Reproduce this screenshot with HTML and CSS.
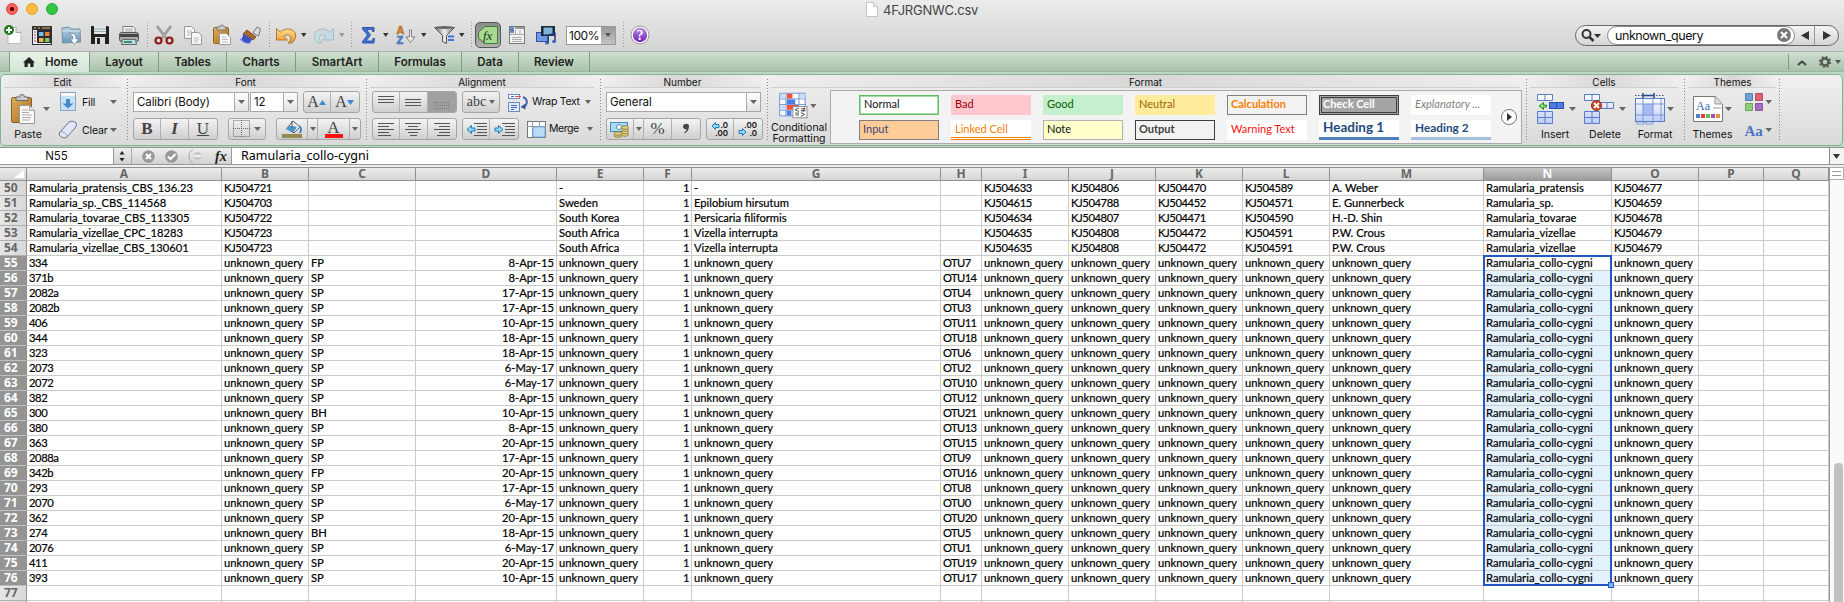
FILE: index.html
```html
<!DOCTYPE html>
<html lang="en">
<head>
<meta charset="utf-8">
<title>4FJRGNWC.csv</title>
<link rel="stylesheet" href="styles.css">
</head>
<body>
<svg width="0" height="0" class="defs">
  <defs>
    <linearGradient id="gBlue" x1="0" y1="0" x2="0" y2="1"><stop offset="0" stop-color="#b9d3e4"/><stop offset="1" stop-color="#6d97b5"/></linearGradient>
    <linearGradient id="gGold" x1="0" y1="0" x2="1" y2="1"><stop offset="0" stop-color="#ddb163"/><stop offset="1" stop-color="#a9690f"/></linearGradient>
    <linearGradient id="gOrange" x1="0" y1="0" x2="0" y2="1"><stop offset="0" stop-color="#ffe0a0"/><stop offset="1" stop-color="#ee9320"/></linearGradient>
    <linearGradient id="gPurple" x1="0" y1="0" x2="0" y2="1"><stop offset="0" stop-color="#b98ae0"/><stop offset="1" stop-color="#6a22b8"/></linearGradient>
    <linearGradient id="gCell" x1="0" y1="0" x2="0" y2="1"><stop offset="0" stop-color="#fff"/><stop offset="1" stop-color="#bccbf5"/></linearGradient>
    <linearGradient id="gMetal" x1="0" y1="0" x2="1" y2="0"><stop offset="0" stop-color="#666"/><stop offset=".5" stop-color="#eee"/><stop offset="1" stop-color="#777"/></linearGradient>
  </defs>
</svg>
<div class="window">
  <header class="chrome">
    <div class="titlebar">
      <div class="lights"><i class="red"></i><i class="yellow"></i><i class="green"></i></div>
      <div class="doc-title"><svg width="14" height="17" viewBox="0 0 14 17"><path d="M1.500 1.500h7l4 4v10h-11z" fill="#fff" stroke="#c4c4c4"/><path d="M8.500 1.500v4h4" fill="#eee" stroke="#c4c4c4"/></svg><span>4FJRGNWC.csv</span></div>
    </div>
    <div class="toolbar">
      <svg width="147" height="30" viewBox="0 20 147 30">
        <path d="M8 27.500h8l5 5v11H8z" fill="#fdfdfd" stroke="#bbb"/><path d="M16 27.500v5h5" fill="#ddd" stroke="#aaa"/>
        <circle cx="9" cy="30" r="5" fill="#1d7a23"/><path d="M9 27v6M6 30h6" stroke="#fff" stroke-width="2"/>
        <rect x="32.500" y="26.500" width="19" height="18" fill="#e8eef5" stroke="#333"/><rect x="32" y="26" width="20" height="4" fill="#333"/><path d="M34 28h2M38 28h2M42 28h8" stroke="#e8b060"/><rect x="37" y="30" width="14" height="13" fill="#272b38"/><rect x="39" y="32" width="4.500" height="4" fill="#6fc1f0"/><rect x="45" y="32" width="4.500" height="4" fill="#f08030"/><rect x="39" y="38" width="4.500" height="4" fill="#f4b63c"/><rect x="45" y="38" width="4.500" height="4" fill="#7cc85a"/><path d="M34 32h2M34 35h2M34 38h2M34 41h2" stroke="#d33"/>
        <path d="M62 28l7-1 2 2h9l.5 13-18 1z" fill="url(#gBlue)" stroke="#6f8ea6"/><path d="M62 31h18" stroke="#d5e5ef"/><path d="M69 33c7 0 7 3 7 6h3l-4.500 5.500-4.500-5.500h3c0-3-1-4-4-6z" fill="#fff" stroke="#6686a0" stroke-width=".8"/>
        <path d="M91 26h17l1 1v17H91z" fill="#222"/><rect x="94" y="26" width="12" height="8" fill="#dfe7ee"/><path d="M94 29h12M94 31.500h12" stroke="#9aa"/><rect x="95" y="37" width="10" height="7" fill="#ddd"/><rect x="97" y="38" width="3" height="6" fill="#222"/>
        <path d="M123 33v-6.500h10l2 2V33" fill="#fff" stroke="#777"/><path d="M125 29h8M125 31h8" stroke="#999"/><rect x="119.500" y="32.500" width="19" height="9" rx="2" fill="#a9a9a9" stroke="#555"/><rect x="120" y="34" width="18" height="3" fill="#444"/><path d="M122.500 39.500h13l1 5h-15z" fill="#b9dcf3" stroke="#666"/><path d="M124 42h8" stroke="#3f8f5a" stroke-width="2"/>
      </svg>
      <i class="dots"></i>
      <svg width="121" height="30" viewBox="148 20 121 30">
        <path d="M157 26l9 12M171 26l-9 12" stroke="#777" stroke-width="2.200"/><path d="M157 26l9 12M171 26l-9 12" stroke="#ddd" stroke-width=".8"/><circle cx="158.500" cy="40.500" r="3" fill="none" stroke="#8e1f16" stroke-width="2.200"/><circle cx="169.500" cy="40.500" r="3" fill="none" stroke="#8e1f16" stroke-width="2.200"/>
        <g fill="#f7f7f7" stroke="#999"><path d="M184.500 26.500h7l3 3v9h-10z"/><path d="M191.500 32.500h7l3 3v9h-10z"/></g><path d="M187 31h5M187 33h5M187 35h3M194 38h5M194 40h5M194 42h4" stroke="#aaa" stroke-width=".8"/>
        <rect x="213.500" y="27.500" width="15" height="16" rx="1" fill="url(#gGold)" stroke="#8d6220"/><path d="M217 30v-3h3a2 2 0 0 1 4 0h2v3z" fill="#ccc" stroke="#666" stroke-width=".8"/><path d="M219.500 33.500h7l4 4v7h-11z" fill="#f9f9f9" stroke="#999"/><path d="M222 37h4M222 39.500h6M222 42h6" stroke="#aaa" stroke-width=".8"/>
        <path d="M253 33l4-6 3.500 2-2 7z" fill="#ddd" stroke="#777"/><path d="M247 30l9 7-3 3-10-6z" fill="#a96a2c" stroke="#6b3c12" stroke-width=".8"/><path d="M243 34l9 5-2 4c-4 1-7 0-10-4 2 0 3-2 3-5z" fill="#3e50c8"/><path d="M241 39c3 4 6 5 9 4" fill="none" stroke="#8ea2f4"/>
      </svg>
      <i class="dots"></i>
      <svg width="81" height="30" viewBox="270 20 81 30">
        <path d="M276.500 28.500v11.500h11l-3.800-3.600c3-2.700 7-2 7 2 0 2-1.200 3.400-2.700 4.600h4c6.500-6 4-13.500-3.500-14-3.500-.2-6.300 1.200-8.300 3.200z" fill="url(#gOrange)" stroke="#b5792a"/>
        <path d="M301 33h5.500l-2.750 4z" fill="#333"/>
        <path d="M333.500 28.500v11.500h-11l3.800-3.600c-3-2.700-7-2-7 2 0 2 1.200 3.400 2.700 4.600h-4c-6.500-6-4-13.500 3.500-14 3.500-.2 6.300 1.200 8.300 3.200z" fill="#c8dae4" stroke="#a5bccb"/>
        <path d="M339 33h5.500l-2.750 4z" fill="#999"/>
      </svg>
      <i class="dots"></i>
      <svg width="119" height="30" viewBox="352 20 119 30">
        <path d="M362.500 27.500H374v4h-1.500c0-2-1-2-2-2h-4l4 5.500-4.500 6h4.500c1.500 0 2-.5 2.500-2.500h1.500l-.5 4.500h-11.500v-1.500l5-6.500-5-6z" fill="#3f72da" stroke="#1c3f9c" stroke-width=".8"/>
        <path d="M383 33h5.500l-2.750 4z" fill="#333"/>
        <text x="396.500" y="34" class="az-a">A</text><text x="396.500" y="44" class="az-z">Z</text>
        <path d="M409.500 30h2v7h3.500l-4.500 5.500-4.500-5.500h3.500z" fill="#eee" stroke="#777" stroke-width=".9"/>
        <path d="M421 33h5.500l-2.750 4z" fill="#333"/>
        <path d="M434.500 27.500h20l-8 8v8l-4-2v-6z" fill="url(#gMetal)" stroke="#555"/><ellipse cx="444.500" cy="27.500" rx="10" ry="1.500" fill="#666"/><path d="M448 36.500h6M448 40h6" stroke="#3c76d6" stroke-width="2"/>
        <path d="M459 33h5.500l-2.750 4z" fill="#333"/>
      </svg>
      <i class="dots"></i>
      <div class="fx-toggle"><svg width="20" height="19" viewBox="0 0 20 19"><path d="M7 .5h12.500v17H7L.5 12V6z" fill="#a9d794" stroke="#3f7d39"/><text x="5" y="13.500" class="fx">fx</text></svg></div>
      <svg width="64" height="30" viewBox="502 20 64 30">
        <rect x="509.500" y="26.500" width="15" height="17" fill="#f4f4f4" stroke="#777"/><rect x="510" y="27" width="4" height="6" fill="#4d9be6"/><rect x="511" y="29" width="2" height="2" fill="#e33"/><path d="M515 28h9" stroke="#999" stroke-width="2"/><path d="M510 34.500h14M515.500 30v5M520 30v5M512 37.500h10M512 39.500h10M512 41.500h10" stroke="#aaa"/>
        <rect x="536.500" y="32.500" width="12" height="9" fill="#6f9ae8" stroke="#2f4f9f"/><rect x="541" y="26" width="14" height="10" fill="#1c2a35"/><rect x="543.500" y="27.500" width="9" height="7" fill="#7fb5d8"/><path d="M548 43v-8l7-1.500v8" fill="none" stroke="#223f85" stroke-width="1.500"/><ellipse cx="547" cy="43" rx="2" ry="1.500" fill="#3c63bb"/><ellipse cx="554" cy="41.500" rx="2" ry="1.500" fill="#3c63bb"/>
      </svg>
      <div class="zoom-box"><span>100%</span><b><svg width="8" height="6"><path d="M1 1h6L4 5z" fill="#555"/></svg></b></div>
      <span class="gap7"></span>
      <i class="dots"></i>
      <svg width="34" height="30" viewBox="624 20 34 30"><circle cx="640" cy="35" r="9" fill="#fff" stroke="#999"/><circle cx="640" cy="35" r="7.200" fill="url(#gPurple)"/><text x="640" y="40" class="help">?</text></svg>
      <div class="search">
        <svg width="31" height="19" viewBox="0 0 31 19"><circle cx="10.500" cy="8" r="4" fill="none" stroke="#333" stroke-width="2"/><path d="M13.500 11l4 4" stroke="#333" stroke-width="2.500"/><path d="M18 8h7l-3.500 4z" fill="#333"/></svg>
        <div class="search-field"><span>unknown_query</span><svg width="16" height="16"><circle cx="8" cy="8" r="7" fill="#777"/><path d="M5 5l6 6M11 5l-6 6" stroke="#fff" stroke-width="2"/></svg></div>
        <div class="nav"><svg width="8" height="9"><path d="M8 0v9L0 4.500z" fill="#333"/></svg></div>
        <div class="nav next"><svg width="8" height="9"><path d="M0 0v9l8-4.500z" fill="#333"/></svg></div>
      </div>
    </div>
  </header>

  <nav class="tabs">
    <div class="tab lead"></div>
    <div class="tab home"><svg width="12" height="10" viewBox="0 0 12 10"><path d="M6 0l6 5.500h-1.500V10H7.300V6.500H4.700V10H1.500V5.500H0z" fill="#222"/></svg><span>Home</span></div>
    <div class="tab w69">Layout</div><div class="tab w68">Tables</div><div class="tab w69">Charts</div><div class="tab w83">SmartArt</div><div class="tab w83">Formulas</div><div class="tab w57">Data</div><div class="tab w71">Review</div>
    <div class="tab-tools"><svg width="54" height="20" viewBox="1789 52 54 20"><path d="M1798 65l4-3.500 4 3.500" fill="none" stroke="#444" stroke-width="2"/><circle cx="1825" cy="62" r="3.500" fill="none" stroke="#555" stroke-width="2.400"/><circle cx="1825" cy="62" r="5.200" fill="none" stroke="#555" stroke-width="1.800" stroke-dasharray="2 2.080"/><path d="M1835 60h6l-3 4z" fill="#555"/></svg></div>
  </nav>

  <section class="ribbon"><div class="panel">
    <div class="group g-edit"><h6>Edit</h6><div class="body">
      <div class="paste"><svg width="52" height="38" viewBox="2 90 52 38">
        <rect x="10.500" y="97.500" width="20" height="25" rx="1.500" fill="url(#gGold)" stroke="#87601f"/><path d="M15 100.500V97h3.500a2.500 2.500 0 0 1 5 0H27v3.500z" fill="#ccc" stroke="#666"/><path d="M18.500 105.500h10l5 5v13h-15z" fill="#fafafa" stroke="#999"/><path d="M28.500 105.500v5h5" fill="#ddd" stroke="#aaa"/><path d="M21 110h6M21 112.500h7M21 115h10M21 117.500h9M21 120h8" stroke="#aaa"/><path d="M42 107h7l-3.500 4z" fill="#666"/></svg><span>Paste</span></div>
      <div class="stack">
        <div class="cmd"><svg width="27" height="24" viewBox="55 90 27 24"><rect x="60.500" y="92.500" width="15" height="18" fill="#c8e1f5" stroke="#8aa5bf"/><rect x="61" y="93" width="14" height="3" fill="#f8f8f8"/><path d="M66 99h4v4.500h3.500l-5.500 5-5.500-5H66z" fill="#4488d0"/></svg><span class="w28">Fill</span><svg class="dn"><path d="M0 0h7l-3.500 4z"/></svg></div>
        <div class="cmd"><svg width="27" height="24" viewBox="55 118 27 24"><path d="M60 132l9-10c1-1 6-1 7 1 1 1 0 4-1 5l-8 9c-2 2-6 0-7-1-1-1-1-3 0-4z" fill="#e1e6f6" stroke="#667291"/><path d="M60 132c1-1 6 0 7 4" fill="none" stroke="#8893b5"/></svg><span class="w28">Clear</span><svg class="dn"><path d="M0 0h7l-3.500 4z"/></svg></div>
      </div>
    </div></div>
    <div class="group g-font"><h6>Font</h6><div class="rows">
      <div class="row"><div class="combo w116"><span>Calibri (Body)</span><b><svg class="dn"><path d="M0 0h7l-3.500 4z"/></svg></b></div><div class="combo w48"><span>12</span><b><svg class="dn"><path d="M0 0h7l-3.500 4z"/></svg></b></div>
        <div class="btns ml5"><div class="w27 serif s14">A<svg width="8" height="5"><path d="M0 5h7L3.500 0z" fill="#3f87d6"/></svg></div><div class="w28 serif s14">A<svg width="8" height="5"><path d="M0 0h7L3.500 5z" fill="#3f87d6"/></svg></div></div></div>
      <div class="row"><div class="btns"><div class="w27 serif bold">B</div><div class="w28 serif ital">I</div><div class="w28 serif und">U</div></div>
        <div class="btns ml10"><div class="w38"><svg width="18" height="18"><path d="M.5.5h16v16H.5zM8.500 0v17M0 8.500h17" fill="none" stroke="#666" stroke-dasharray="1 1"/></svg><svg class="dn ml3"><path d="M0 0h7l-3.500 4z"/></svg></div></div>
        <div class="btns ml10"><div class="w31"><svg width="24" height="20" viewBox="278 119 24 20"><path d="M286 127l5-6 7 6-6 6z" fill="#f4f4f4" stroke="#555"/><path d="M284 129c2-4 5-3 11-2l-4 6z" fill="#4692c9"/><path d="M297 126c3 2 2 4 1 7" fill="none" stroke="#3987c4" stroke-width="2"/><path d="M290 121v6" stroke="#555"/><rect x="280" y="134" width="20" height="4" fill="#948a54"/></svg></div><div class="w10"><svg class="dn sm"><path d="M0 0h6l-3 4z"/></svg></div><div class="w32 fontcolor serif"><span>A</span><i></i></div><div class="w10"><svg class="dn sm"><path d="M0 0h6l-3 4z"/></svg></div></div></div>
    </div></div>
    <div class="group g-align"><h6>Alignment</h6><div class="rows">
      <div class="row"><div class="btns"><div class="w27"><svg width="17" height="16" class="lines"><path d="M0 2.500h16M0 5.500h16M0 8.500h16"/></svg></div><div class="w28"><svg width="17" height="16" class="lines"><path d="M0 5.500h16M0 8.500h16M0 11.500h16"/></svg></div><div class="w28 on"><svg width="17" height="16" class="lines faint"><path d="M0 8.500h16M0 11.500h16M0 14.500h16"/></svg></div></div>
        <div class="btns ml5"><div class="w37 serif s13">abc<svg class="dn ml3 sm"><path d="M0 0h6l-3 4z"/></svg></div></div>
        <svg class="ml7" width="24" height="22" viewBox="505 90 24 22"><rect x="506.500" y="93.500" width="11" height="4" fill="#fff" stroke="#6b8ac4"/><path d="M509 95.500h3" stroke="#456fc0"/><path d="M513 95.500h6" stroke="#e05050"/><rect x="506.500" y="101.500" width="11" height="9" fill="#dfe9fa" stroke="#6b8ac4"/><path d="M509 104.500h6M509 106.500h6M509 108.500h3" stroke="#456fc0"/><path d="M521 96c5 2 5 7 1 10" fill="none" stroke="#4a68b3" stroke-width="2"/><path d="M518.500 106l5-3.500v6z" fill="#34529f"/></svg><span class="lbl wrap">Wrap Text</span><svg class="dn sm"><path d="M0 0h6l-3 4z"/></svg></div>
      <div class="row"><div class="btns"><div class="w27"><svg width="17" height="16" class="lines"><path d="M0 2.500h16M0 5.500h11M0 8.500h16M0 11.500h11M0 14.500h13"/></svg></div><div class="w28"><svg width="17" height="16" class="lines"><path d="M0 2.500h16M3 5.500h10M0 8.500h16M3 11.500h10M5 14.500h7"/></svg></div><div class="w28"><svg width="17" height="16" class="lines"><path d="M0 2.500h16M5 5.500h11M0 8.500h16M5 11.500h11M3 14.500h13"/></svg></div></div>
        <div class="btns ml5"><div class="w27"><svg width="21" height="16" class="lines"><path d="M8 2.500h13M11 5.500h10M11 8.500h10M11 11.500h10M8 14.500h13"/><path d="M1 8.500l4.500-4v2.500H9v3H5.500v2.500z" class="cyan"/></svg></div><div class="w28"><svg width="21" height="16" class="lines"><path d="M8 2.500h13M11 5.500h10M11 8.500h10M11 11.500h10M8 14.500h13"/><path d="M9 8.500l-4.500-4v2.500H1v3h3.500v2.500z" class="cyan"/></svg></div></div>
        <svg class="ml7" width="22" height="20" viewBox="523 119 22 20"><rect x="524.500" y="121.500" width="18" height="16" fill="#fff" stroke="#777"/><path d="M524 126.500h19M529.500 121v16M536.500 121v5" stroke="#99a"/><rect x="530" y="127" width="12" height="10" fill="#b9dbf7" stroke="#6aa2dc" stroke-width=".8"/></svg><span class="lbl merge">Merge</span><svg class="dn"><path d="M0 0h6l-3 4z"/></svg></div>
    </div></div>
    <div class="group g-number"><h6>Number</h6><div class="rows">
      <div class="row"><div class="combo w155"><span>General</span><b><svg class="dn"><path d="M0 0h7l-3.500 4z"/></svg></b></div></div>
      <div class="row"><div class="btns"><div class="w27"><svg width="20" height="17"><rect x=".5" y="1.500" width="17" height="9" fill="#a9dcf3" stroke="#4a8fb5"/><circle cx="9" cy="6" r="2.500" fill="#fff" stroke="#4a8fb5"/><g fill="#e0cf86" stroke="#857233" stroke-width=".8"><ellipse cx="8" cy="14.500" rx="4" ry="1.800"/><ellipse cx="8" cy="12.500" rx="4" ry="1.800"/><ellipse cx="15" cy="13.500" rx="3.500" ry="1.800"/><ellipse cx="15" cy="11" rx="3.500" ry="1.800"/><ellipse cx="15" cy="8.500" rx="3.500" ry="1.800"/><ellipse cx="15" cy="6.500" rx="3.500" ry="1.800"/></g></svg></div><div class="w10"><svg class="dn sm"><path d="M0 0h6l-3 4z"/></svg></div><div class="w28 serif pct">%</div><div class="w28"><svg width="8" height="12" viewBox="0 0 8 12"><path d="M3.500 1a2.500 2.500 0 0 1 3.500 2.500c0 3.500-2 5.500-4.500 7l-.5-.8c1.500-1 2.500-2.200 2.600-3.500C2 6.500 1 5 1 3.600A2.500 2.500 0 0 1 3.500 1z" fill="#444"/></svg></div></div>
        <div class="btns ml5"><div class="w27 dec"><span>.0</span><span>.00</span><svg width="9" height="8"><path d="M1 4l3.500-3.500v2H8v3H4.500v2z" class="cyan"/></svg></div><div class="w28 dec d2"><span>.00</span><span>.0</span><svg width="9" height="8"><path d="M8 4L4.500.5v2H1v3h3.500v2z" class="cyan"/></svg></div></div></div>
    </div></div>
    <div class="group g-format"><h6>Format</h6><div class="body">
      <div class="cond"><svg width="50" height="34" viewBox="775 90 50 34"><rect x="779.500" y="93.500" width="27" height="24" fill="#fff" stroke="#6b90d8"/><path d="M779 99.500h28M779 105.500h28M779 111.500h28M786 93v25M800 93v25" stroke="#6b90d8"/><path d="M780 94h6v5h-6zM780 106h6v5h-6zM801 94h5v5h-5z" fill="#cbdcf8"/><path d="M787 94h6v5h-6zM787 106h12v5h-12z" fill="#f0513a"/><path d="M787 100h9v5h-9zM787 112h5v5h-5z" fill="#4d7de0"/><rect x="793.500" y="107.500" width="15" height="12" fill="#fff" stroke="#888"/><path d="M800 109l-4 2 4 2M796 114.500h4M802 110h5M802 112h5M806 108.500l-2 5M802 114l4 2-4 2M796 116.500h4" fill="none" stroke="#333" stroke-width=".9"/><path d="M812 105h6.500l-3.250 4z" fill="#666"/></svg><span>Conditional</span><span>Formatting</span></div>
      <div class="gallery"><div class="styles">
        <div class="st normal">Normal</div><div class="st bad">Bad</div><div class="st good">Good</div><div class="st neutral">Neutral</div><div class="st calc">Calculation</div><div class="st check">Check Cell</div><div class="st expl">Explanatory ...</div>
        <div class="st input">Input</div><div class="st linked">Linked Cell</div><div class="st note">Note</div><div class="st output">Output</div><div class="st warn">Warning Text</div><div class="st head1">Heading 1</div><div class="st head2">Heading 2</div>
      </div><svg width="18" height="18"><circle cx="9" cy="9" r="7.500" fill="#fff" stroke="#777"/><path d="M7 5v8l5-4z" fill="#333"/></svg></div>
    </div></div>
    <div class="group g-cells"><h6>Cells</h6><div class="body">
      <div class="big w50"><svg width="50" height="38" viewBox="1530 90 50 38"><g fill="url(#gCell)" stroke="#5b7cc8"><path d="M1537.500 94.500h15v6h-15zM1545 94v7M1537.500 111.500h15v12h-15zM1545 111v13M1537 117.500h16"/></g><rect x="1549.500" y="102.500" width="14" height="6" fill="#4f7ce0" stroke="#2a4fae"/><path d="M1556.500 103v6" stroke="#2a4fae"/><path d="M1539 106l4.500-3.500v2.500h3v2h-3v2.500z" fill="#8be07a" stroke="#2f8f2f"/><path d="M1569 107h7l-3.500 4z" fill="#666"/></svg><span>Insert</span></div>
      <div class="big w50"><svg width="50" height="38" viewBox="1580 90 50 38"><g fill="url(#gCell)" stroke="#5b7cc8"><path d="M1584.500 94.500h15v6h-15zM1592 94v7M1584.500 111.500h15v12h-15zM1592 111v13M1584 117.500h16M1600.500 102.500h13v6h-13zM1607 102v7"/></g><circle cx="1596.500" cy="105.500" r="5" fill="#cf4a20" stroke="#8c2e10"/><path d="M1594 103l5 5M1599 103l-5 5" stroke="#fff" stroke-width="1.800"/><path d="M1619 107h7l-3.500 4z" fill="#666"/></svg><span>Delete</span></div>
      <div class="big w50"><svg width="50" height="38" viewBox="1630 90 50 38"><path d="M1635 95.500h30" stroke="#456" stroke-dasharray="1.500 1.500"/><path d="M1643 95.500h11M1643 93v5M1654 93v5" stroke="#234a8c" stroke-width="1.500"/><rect x="1635.500" y="98.500" width="29" height="23" fill="url(#gCell)" stroke="#5b7cc8"/><rect x="1643" y="104" width="10" height="12" fill="#a8bbf3"/><path d="M1643 99v22M1653 99v22M1661 99v22M1636 104h29M1636 115h29" stroke="#7d98dc"/><path d="M1637 122h7v2h-7zM1646 122h7v2h-7z" fill="#fff" stroke="#5b7cc8" stroke-width=".8"/><path d="M1667 107h7l-3.500 4z" fill="#666"/></svg><span>Format</span></div>
    </div></div>
    <div class="group g-themes"><h6>Themes</h6><div class="body">
      <div class="big w53"><svg width="53" height="38" viewBox="1686 90 53 38"><path d="M1693.500 96.500h22l7 8v17h-29z" fill="#fdfdfd" stroke="#777"/><path d="M1715 97v7h7" fill="#ddd" stroke="#999"/><path d="M1713 108h8" stroke="#ccc" stroke-width="2"/><text x="1696" y="110" class="aa">Aa</text><path d="M1696 114h4v4h-4z" fill="#4d7fc0"/><path d="M1701 114h4v4h-4z" fill="#cc4848"/><path d="M1706 114h4v4h-4z" fill="#72b84e"/><path d="M1711 114h4v4h-4z" fill="#9c55c0"/><path d="M1716 114h4v4h-4z" fill="#f08c3c"/><path d="M1725 107h7l-3.500 4z" fill="#666"/></svg><span>Themes</span></div>
      <svg width="38" height="57" viewBox="1739 88 38 57"><g stroke-width=".8"><path d="M1745.500 93.500h7v7h-7z" fill="#6fa0d6" stroke="#3f6da0"/><path d="M1755.500 93.500h7v7h-7z" fill="#dc6570" stroke="#a23b45"/><path d="M1745.500 103.500h7v7h-7z" fill="#93cc78" stroke="#5d9845"/><path d="M1755.500 103.500h7v7h-7z" fill="#a96cc4" stroke="#75408f"/></g><path d="M1765.500 100h6.500l-3.250 4z" fill="#666"/><text x="1744.500" y="136" class="aa2">Aa</text><path d="M1765.500 128h6.500l-3.250 4z" fill="#666"/></svg>
    </div></div>
  </div></section>

  <div class="formula">
    <div class="namebox">N55</div>
    <div class="fbtns"><svg width="117" height="16" viewBox="114 148 117 16"><path d="M119.500 154.500h5l-2.500-3.500zM119.500 158h5l-2.500 3.500z" fill="#222"/><path d="M131.500 148v16" stroke="#aaa"/><circle cx="148.500" cy="156.500" r="6.300" fill="#999"/><path d="M146 154l5 5M151 154l-5 5" stroke="#fff" stroke-width="2"/><circle cx="171.500" cy="156.500" r="6.300" fill="#999"/><path d="M168 156.500l2.500 2.500 5-5" fill="none" stroke="#fff" stroke-width="2"/><path d="M193 149.500a8 8 0 0 0 0 14" fill="none" stroke="#aaa"/><circle cx="197.500" cy="156" r="4" fill="#c8c8c8"/><path d="M194 156h7" stroke="#eee" stroke-width="2"/><text x="215" y="160.500" class="fxb">fx</text></svg></div>
    <div class="ftext">Ramularia_collo-cygni</div>
    <div class="fdrop"><svg width="8" height="6"><path d="M0 1h7L3.500 6z" fill="#333"/></svg></div>
  </div>

  <main class="sheet">
    <div class="grid"><table><colgroup id="cols"></colgroup><thead id="head"></thead><tbody id="rows"></tbody></table><div class="selection"><i></i></div></div>
    <div class="scroll"><div class="split"></div><div class="track"><div class="thumb"></div></div></div>
  </main>
</div>
<script src="sheet.js"></script>
</body>
</html>
```
FILE: sheet.js
```js
const widths = [27, 195, 87, 107, 141, 87, 48, 249, 41, 87, 87, 87, 87, 154, 128, 87, 65, 65];
const letters = "ABCDEFGHIJKLMNOPQ".split("");
const Q = "unknown_query";

const specimens = [
  ["Ramularia_pratensis_CBS_136.23", "KJ504721", "-", "-", "KJ504633", "KJ504806", "KJ504470", "KJ504589", "A. Weber", "Ramularia_pratensis", "KJ504677"],
  ["Ramularia_sp._CBS_114568", "KJ504703", "Sweden", "Epilobium hirsutum", "KJ504615", "KJ504788", "KJ504452", "KJ504571", "E. Gunnerbeck", "Ramularia_sp.", "KJ504659"],
  ["Ramularia_tovarae_CBS_113305", "KJ504722", "South Korea", "Persicaria filiformis", "KJ504634", "KJ504807", "KJ504471", "KJ504590", "H.-D. Shin", "Ramularia_tovarae", "KJ504678"],
  ["Ramularia_vizellae_CPC_18283", "KJ504723", "South Africa", "Vizella interrupta", "KJ504635", "KJ504808", "KJ504472", "KJ504591", "P.W. Crous", "Ramularia_vizellae", "KJ504679"],
  ["Ramularia_vizellae_CBS_130601", "KJ504723", "South Africa", "Vizella interrupta", "KJ504635", "KJ504808", "KJ504472", "KJ504591", "P.W. Crous", "Ramularia_vizellae", "KJ504679"]
].map(r => [r[0], r[1], "", "", r[2], "1", r[3], "", ...r.slice(4), "", ""]);

const queries = `334 FP 8-Apr-15 7|371b SP 8-Apr-15 14|2082a SP 17-Apr-15 4|2082b SP 17-Apr-15 3|406 SP 10-Apr-15 11|344 SP 18-Apr-15 18|323 SP 18-Apr-15 6|2073 SP 6-May-17 2|2072 SP 6-May-17 10|382 SP 8-Apr-15 12|300 BH 10-Apr-15 21|380 SP 8-Apr-15 13|363 SP 20-Apr-15 15|2088a SP 17-Apr-15 9|342b FP 20-Apr-15 16|293 SP 17-Apr-15 8|2070 SP 6-May-17 0|362 SP 20-Apr-15 20|274 BH 18-Apr-15 5|2076 SP 6-May-17 1|411 SP 20-Apr-15 19|393 SP 10-Apr-15 17`
  .split("|").map(s => {
    const [id, type, date, otu] = s.split(" ");
    return [id, Q, type, date, Q, "1", Q, "OTU" + otu, Q, Q, Q, Q, Q, "Ramularia_collo-cygni", Q, "", ""];
  });

const blank = Array(17).fill("");
const all = [...specimens, ...queries, blank, blank];

function cellClass(text, col, n) {
  const c = [];
  if (col === 3 || col === 5) c.push("num");
  if (/^KJ|^\d+[a-z]?$/.test(text)) c.push("digits");
  if (/^OTU/.test(text)) c.push("otu");
  if (col === 13 && n > 55 && n <= 76) c.push("tint");
  return c.join(" ");
}

document.getElementById("cols").innerHTML = widths.map(w => `<col style="width:${w}px">`).join("");
document.getElementById("head").innerHTML = `<tr><th class="corner"><svg width="11" height="9"><path d="M10 0v8H0z" fill="#fff"/></svg></th>` +
  letters.map(l => `<th class="${l === "N" ? "sel" : ""}">${l}</th>`).join("") + "</tr>";
document.getElementById("rows").innerHTML = all.map((r, i) => {
  const n = 50 + i;
  return `<tr><th class="${n >= 55 && n <= 76 ? "sel" : ""}">${n <= 77 ? n : ""}</th>` +
    r.map((t, c) => `<td class="${cellClass(t, c, n)}">${t}</td>`).join("") + "</tr>";
}).join("");
```
FILE: styles.css
```css
*{box-sizing:border-box}
html,body{margin:0;height:602px;overflow:hidden}
body{font-family:Inter,"Liberation Sans",sans-serif;color:#111;background:#fff}
svg{display:block;flex:none}
.defs{position:absolute}
.window{width:1844px;height:602px;display:flex;flex-direction:column;overflow:hidden}
.chrome{height:52px;flex:none;background:linear-gradient(#ececec,#d3d3d3);border-bottom:1px solid #b0b0b0}
.titlebar{height:20px;display:flex;align-items:flex-start}
.lights{display:flex;gap:8px;padding:3px 0 0 6px;width:865px}
.lights i{width:12px;height:12px;border-radius:50%;border:1px solid #e2463f;background:#fc5b57}
.lights .red{background:radial-gradient(circle,#5a0505 0 1.8px,#fc6360 2.500px)}
.lights .yellow{background:#fdbc40;border-color:#e0a028}
.lights .green{background:#33c748;border-color:#27a935}
.doc-title{display:flex;align-items:center;gap:4px;font-size:13px;color:#444;height:19px;letter-spacing:-.25px}
.toolbar{height:30px;display:flex;align-items:center}
.dots{width:1px;height:26px;flex:none;background:repeating-linear-gradient(#999 0 1px,transparent 1px 3px)}
.az-a,.az-z{font:bold 11px "Liberation Sans",sans-serif;fill:#e09038;stroke:#96500f;stroke-width:.5px}
.az-z{fill:#5f95e8;stroke:#2a55a8}
.fx-toggle{width:26px;height:26px;margin:0 1px 0 3px;border:1px solid #555;border-radius:5px;background:linear-gradient(#8c8c8c,#b0b0b0);display:flex;align-items:center;justify-content:center}
.fx{font:italic 13px "Liberation Serif",serif;fill:#173c17}
.help{font:bold 14px "Liberation Serif",serif;fill:#fff;text-anchor:middle}
.zoom-box{width:50px;height:19px;border:1px solid #999;background:#fff;display:flex;justify-content:space-between;align-items:center;font-size:12px;letter-spacing:-.45px;padding-left:2px;flex:none}
.zoom-box b{width:14px;height:17px;background:linear-gradient(#999,#c4c4c4);display:flex;align-items:center;justify-content:center}
.gap7{width:7px}
.search{margin-left:917px;width:264px;height:21px;border:1px solid #666;border-radius:11px;display:flex;align-items:center;background:linear-gradient(#f4f4f4,#d4d4d4);overflow:hidden;flex:none}
.search-field{width:188px;height:19px;border-radius:10px;border:1px solid #888;background:#fff;display:flex;justify-content:space-between;align-items:center;padding:0 2px 0 7px;font-size:12.500px;letter-spacing:-.45px}
.nav{width:20px;height:19px;display:flex;align-items:center;justify-content:center;border-right:1px solid #999}
.nav.next{border:0;flex:1}

.tabs{height:20px;flex:none;display:flex;background:linear-gradient(#cfdfce,#aac3ac);border-bottom:1px solid #9db79f}
.tab{font-weight:600;font-size:11.500px;line-height:20px;text-align:center;color:#222;border-right:1px solid #7f9d82;flex:none;height:20px}
.lead{width:10px}
.home{width:80px;background:linear-gradient(#e9f3ea,#d3e5d6);display:flex;align-items:center;gap:10px;padding-left:13px}
.w69{width:69px}.w68{width:68px}.w83{width:83px}.w57{width:57px}.w71{width:71px}
.tab-tools{margin-left:auto;border-left:1px solid #7f9d82;width:56px;height:16px;margin-top:2px}
.tab-tools svg{margin-top:-2px}
.ribbon{height:76px;flex:none;background:#bcd8c3;border-bottom:1px solid #8d9a8f;padding:2px 1px 2px 0}
.panel{height:72px;border:1px solid #87b195;border-radius:5px;background:linear-gradient(#f0f0f0,#dadada);display:flex;overflow:hidden}
.group{height:70px;flex:none;position:relative;display:flex;flex-direction:column}
.group::after{content:"";position:absolute;right:0;top:4px;width:1px;height:62px;background:repeating-linear-gradient(#888 0 1px,transparent 1px 3px)}
.group h6{margin:0 7px 0 3px;height:13px;flex:none;font-weight:400;font-size:10px;line-height:14px;text-align:center;color:#111;background:linear-gradient(90deg,transparent,#d8d8d8 50%,transparent);border-bottom:1px solid #cfcfcf}
.g-themes h6{margin:0 4px}
.g-edit{width:127px}.g-font{width:239px}.g-align{width:234px}.g-number{width:167px}.g-format{width:759px}.g-cells{width:158px}.g-themes{width:95px}
.body{display:flex;height:57px}
.rows{display:flex;flex-direction:column;gap:5px;padding:3px 0 0 5px}
.row{display:flex;height:22px;align-items:center}
.paste,.big{display:flex;flex-direction:column;align-items:center;font-size:10.500px;padding-top:2px}
.paste span,.big span{line-height:13px}
.paste{width:54px;padding-left:2px}
.paste span{margin-right:2px}
.stack{display:flex;flex-direction:column;gap:4px;padding-top:2px}
.cmd{display:flex;align-items:center;height:24px;font-size:10.500px}
.cmd span{letter-spacing:-.15px}
.w28{width:28px}.w27{width:27px}
.dn{width:7px;height:4px;fill:#666}.dn.sm{width:6px}
.combo{height:20px;border:1px solid #a8a8a8;background:#fff;display:flex;justify-content:space-between;align-items:center;font-size:11.500px;padding-left:3px;margin-right:1px;flex:none;letter-spacing:-.1px}
.combo b{width:14px;height:18px;border-left:1px solid #aaa;background:linear-gradient(#fdfdfd,#e3e3e3);display:flex;align-items:center;justify-content:center}
.w116{width:116px}.w48{width:48px}.w155{width:155px}
.btns{display:flex;height:22px;border:1px solid #a6a6a6;border-radius:3px;background:linear-gradient(#f3f3f3,#cfcfcf);flex:none;overflow:hidden}
.btns>div{display:flex;align-items:center;justify-content:center;height:20px;border-right:1px solid #b0b0b0}
.btns>div:last-child{border-right:0}
.ml3{margin-left:3px}.ml5{margin-left:4px}.ml7{margin-left:7px}.ml10{margin-left:10px}
.rows .row:last-child .ml5{margin-left:5px}
.g-align .ml5{margin-left:5px}
.serif{font-family:"Liberation Serif",serif;color:#444;font-size:17px}
.s14{font-size:16px}.s13{font-size:14px}
.bold{font-weight:bold}.ital{font-style:italic;font-weight:bold}.und{text-decoration:underline}
.w38{width:36px}.w31{width:31px}.w10{width:10px}.w32{width:32px}.w37{width:36px}
.fontcolor{flex-direction:column}
.fontcolor span{height:14px;line-height:15px}
.fontcolor i{width:18px;height:4px;background:#f11}
.lines{stroke:#555;fill:none}.lines.faint{stroke:#777;stroke-dasharray:1 1}
.btns .on{background:#a0a0a0}
.cyan{fill:#8fd8f8;stroke:#1a7db8;stroke-width:1px}
.lbl{font-size:10.500px;white-space:nowrap;letter-spacing:-.3px;line-height:16px}
.wrap{width:53px;margin-left:1px}
.merge{width:37px;margin-left:1px;margin-right:1px;letter-spacing:-.45px}
.pct{font-size:17px}
.dec{flex-direction:column;font-size:8px;font-weight:600;line-height:8px;position:relative}
.btns>.dec{align-items:flex-end;padding-right:5px}
.dec svg{position:absolute;left:4px;top:3px}
.d2 svg{top:9px}
.cond{width:62px;display:flex;flex-direction:column;align-items:center;font-size:10.500px;padding-top:2px}
.cond svg{height:32px}
.cond span{line-height:11px}
.gallery{width:692px;height:54px;margin-top:2px;border:1px solid #aaa;background:#f3f3f3;display:flex;align-items:center;padding-left:28px;font-family:Lato,sans-serif}
.styles{display:grid;grid-template-columns:repeat(7,80px);grid-auto-rows:20px;gap:5px 12px;margin-right:9px}
.st{background:#fff;font-size:11px;line-height:17px;padding-left:4px;white-space:nowrap;border:0 solid}
.normal{border:1px solid #61bd61;box-shadow:inset 0 0 0 1px #a6dba6;line-height:15px}
.bad{background:#ffc7ce;color:#9c0006}.good{background:#c6efce;color:#006100}.neutral{background:#ffeb9c;color:#9c6500}
.calc{background:#f2f2f2;border:1px solid #7f7f7f;color:#fa7d00;font-weight:bold;line-height:15px;padding-left:3px}
.check{background:#a5a5a5;border:3px double #3f3f3f;color:#fff;font-weight:bold;line-height:11px;padding-left:1px}
.expl{color:#7f7f7f;font-style:italic}
.input{background:#ffcc99;border:1px solid #7f7f7f;color:#3f3f76;line-height:15px;padding-left:3px}
.linked{color:#fa7d00;border-bottom:3px double #ff8001}
.note{background:#ffffcc;border:1px solid #b2b2b2;line-height:15px;padding-left:3px}
.output{background:#f2f2f2;border:1px solid #3f3f3f;color:#3f3f3f;font-weight:bold;line-height:15px;padding-left:3px}
.warn{color:#f11}
.head1,.head2{color:#1f497d;font-weight:bold;border-bottom:3px solid #4f81bd}
.head1{font-size:13.500px;line-height:15px}.head2{font-size:11.800px;border-color:#a7bfde;line-height:16px}
.w50{width:50px}.g-cells .body{padding-left:3px}.g-themes .body{padding-left:1px}
.big.w53{width:53px}
.aa{font:12px "Liberation Serif",serif;fill:#2f6cb8}.aa2{font:bold 15px "Liberation Serif",serif;fill:#4b74c4}

.formula{height:19px;flex:none;display:flex;background:#e4e4e4;border-bottom:3px solid #eee;position:relative}
.formula::after{content:"";position:absolute;left:0;right:0;top:16px;height:1px;background:#999}
.namebox{width:114px;background:#fff;text-align:center;font-size:11.500px;line-height:16px;border-right:1px solid #999}
.fbtns{background:linear-gradient(#eee,#d2d2d2);width:117px}
.fxb{font:italic bold 14px "Liberation Serif",serif;fill:#222}
.ftext{flex:1;background:#fff;border-left:1px solid #999;font:12.500px/16px "Noto Sans",sans-serif;padding-left:9px;color:#000}
.fdrop{width:15px;background:#f4f4f4;border-left:1px solid #888;display:flex;align-items:center;justify-content:center}

.sheet{flex:1;display:flex;overflow:hidden;min-height:0}
.grid{width:1829px;position:relative;overflow:hidden;flex:none}
table{border-collapse:separate;border-spacing:0;table-layout:fixed;width:1829px}
th,td{padding:0;white-space:nowrap;height:15px}
th{font:bold 12px/13px "Noto Sans",sans-serif;color:#666}
thead th{height:14px;line-height:12px;background:linear-gradient(#ececec,#d6d6d6);border-right:1px solid #909090;border-bottom:1px solid #909090;border-top:1px solid #909090}
thead th.sel{background:linear-gradient(#c4c4c4,#9c9c9c);color:#fff}
.corner svg{margin-left:14px}
tbody th{background:linear-gradient(90deg,#e6e6e6,#d8d8d8);border-right:1px solid #909090;border-bottom:1px solid #b0b0b0;text-align:left;padding-left:4px;line-height:14px}
tbody th.sel{background:#949494;color:#fff;border-bottom-color:#c0c0c0}
td{font:11.200px/14px Lato,sans-serif;color:#000;border-right:1px solid #cbcbcb;border-bottom:1px solid #cbcbcb;padding-left:2px;-webkit-text-stroke:.2px #000}
td.num{text-align:right;padding:0 2px 0 0}
td.digits{letter-spacing:-.4px}
td.otu{letter-spacing:-.6px}
td.tint{background:#e3f1fd}
.selection{position:absolute;left:1483px;top:88px;width:129px;height:331px;border:2px solid #2456c4}
.selection i{position:absolute;right:-4px;bottom:-4px;width:6px;height:6px;background:#7db4f0;border:1px solid #2456c4}
.scroll{width:15px;display:flex;flex-direction:column;background:#fafafa;border-left:1px solid #999}
.split{height:13px;flex:none;border:1px solid #aaa;border-left:0;background:linear-gradient(90deg,#fff 0 2px,transparent 2px 11px,#fff 11px),linear-gradient(#fff 0 3px,#999 3px 4px,#fff 4px 7px,#999 7px 8px,#fff 8px)}
.track{flex:1;min-height:0;overflow:hidden;padding:283px 0 0 4px}
.thumb{width:9px;height:160px;border-radius:4px 4px 0 0;background:#c1c1c1}
```
